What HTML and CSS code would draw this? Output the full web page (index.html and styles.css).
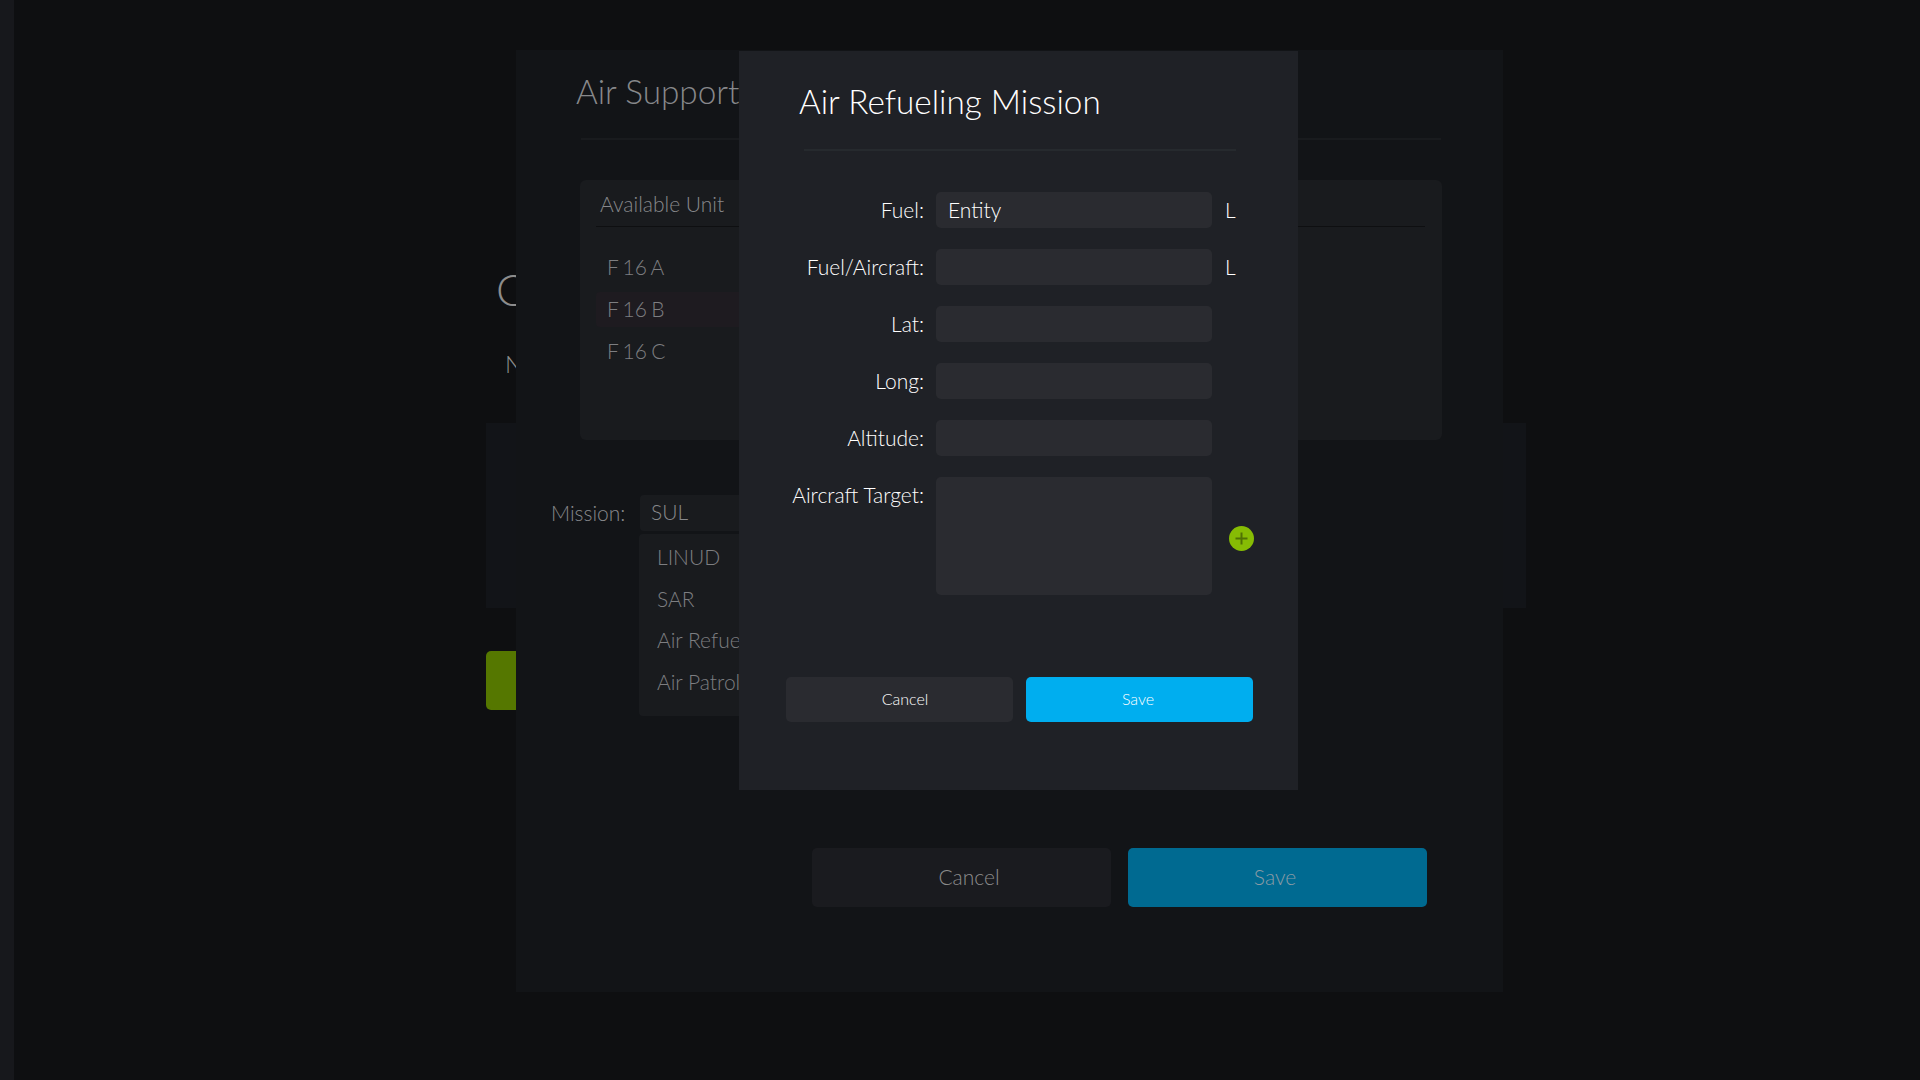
FILE: index.html
```html
<!DOCTYPE html>
<html lang="en">
<head>
<meta charset="utf-8">
<title>Air Refueling Mission</title>
<link rel="stylesheet" href="styles.css">
</head>
<body>
<div class="page">
  <aside class="sidebar"></aside>
  <main class="base">
    <h1 class="base-title">Create</h1>
    <p class="base-sub">New</p>
    <section class="base-panel"></section>
    <button class="base-green">Next</button>
  </main>
</div>

<div class="dialog dialog-back">
  <h2 class="dialog-title back-title">Air Support Request</h2>
  <div class="back-rule"></div>
  <section class="card">
    <div class="card-head">Available Unit</div>
    <ul class="unit-list">
      <li class="unit">F 16 A</li>
      <li class="unit unit-active">F 16 B</li>
      <li class="unit">F 16 C</li>
    </ul>
  </section>
  <div class="mission">
    <span class="mission-label">Mission:</span>
    <div class="mission-field">
      <div class="select">SUL</div>
      <ul class="dropdown">
        <li>LINUD</li>
        <li>SAR</li>
        <li>Air Refueling</li>
        <li>Air Patrol</li>
      </ul>
    </div>
  </div>
  <div class="back-actions">
    <button class="back-btn back-cancel">Cancel</button>
    <button class="back-btn back-save">Save</button>
  </div>
</div>

<div class="dialog dialog-front">
  <h2 class="dialog-title front-title">Air Refueling Mission</h2>
  <div class="front-rule"></div>
  <form class="form">
    <div class="row"><label class="label">Fuel:</label><div class="input">Entity</div><span class="unit-sign">L</span></div>
    <div class="row"><label class="label">Fuel/Aircraft:</label><div class="input"></div><span class="unit-sign">L</span></div>
    <div class="row"><label class="label">Lat:</label><div class="input"></div></div>
    <div class="row"><label class="label">Long:</label><div class="input"></div></div>
    <div class="row"><label class="label">Altitude:</label><div class="input"></div></div>
    <div class="row"><label class="label">Aircraft Target:</label><div class="input textarea"></div>
      <span class="add"><svg width="25" height="25" viewBox="0 0 25 25"><circle cx="12.5" cy="12.5" r="12.5" fill="#86bc04"/><path d="M12.5 6.5v12M6.5 12.5h12" stroke="#507204" stroke-width="2" fill="none"/></svg></span>
    </div>
  </form>
  <div class="front-actions">
    <button class="front-btn front-cancel">Cancel</button>
    <button class="front-btn front-save">Save</button>
  </div>
</div>
</body>
</html>
```

FILE: styles.css
```css
* { box-sizing: border-box; }
html, body { margin: 0; height: 100%; }
body {
  background: #0e0f11;
  font-family: Lato, "Liberation Sans", sans-serif;
  font-weight: 300;
  overflow: hidden;
}
ul { list-style: none; margin: 0; padding: 0; }
button { font-family: inherit; border: 0; cursor: pointer; }

.page { display: flex; height: 1080px; }
.sidebar { width: 14px; background: #17181c; flex: none; }
.base { flex: 1; padding: 264px 0 0 472px; }
.base-title { margin: 0 0 0 10px; font-size: 44px; font-weight: 300; line-height: 50px; color: #8c8c8c; }
.base-sub { margin: 35px 0 0 19px; font-size: 24px; line-height: 30px; color: #8c8c8c; height: 30px; }
.base-panel { width: 1040px; height: 185px; margin-top: 44px; background: #121418; }
.base-green { display: block; width: 120px; height: 59px; margin-top: 43px; background: #557700; border-radius: 5px; color: #557700; }

.dialog { position: absolute; }
.dialog-title { margin: 0; font-size: 33.3px; font-weight: 300; line-height: 40px; }

.dialog-back { left: 516px; top: 50px; width: 987px; height: 942px; background: #121417; padding-top: 21px; }
.back-title { margin-left: 60px; color: #87888b; white-space: nowrap; }
.back-rule { height: 2px; width: 860px; margin: 27px 0 0 65px; background: #191b1e; }
.card { width: 862px; height: 260px; margin: 40px 0 0 64px; padding: 0 17px 0 16px; background: #191b1e; border-radius: 6px; }
.card-head { height: 47px; padding-left: 4px; border-bottom: 1px solid #0e0f11; font-size: 21px; line-height: 47px; color: #87888b; }
.unit-list { margin-top: 23px; }
.unit { width: 600px; height: 35px; margin-bottom: 7px; padding-left: 11px; font-size: 21px; line-height: 33px; word-spacing: -1.5px; color: #7d7e81; border-radius: 4px; }
.unit-active { background: #1e1b20; }

.mission { display: flex; margin: 55px 0 0 35px; }
.mission-label { width: 89px; font-size: 21px; line-height: 36px; color: #87888b; }
.mission-field { width: 360px; }
.select { height: 36px; padding-left: 11px; background: #191b1e; border-radius: 4px; font-size: 21px; line-height: 34px; color: #87888b; }
.dropdown { height: 182px; margin: 3px 0 0 -1px; padding: 6px 0 0 18px; background: #191b1e; border-radius: 4px; font-size: 21px; color: #7d7e81; }
.dropdown li { height: 34px; margin-bottom: 7.7px; line-height: 34px; white-space: nowrap; }

.back-actions { display: flex; gap: 17px; margin: 132px 0 0 296px; }
.back-btn { width: 299px; height: 59px; padding-bottom: 4px; border-radius: 5px; font-size: 21px; font-weight: 300; }
.back-cancel { background: #1a1b1f; color: #8c8c8c; padding-left: 21px; }
.back-save { background: #006a91; color: #8a9ba5; padding-right: 11px; }

.dialog-front { left: 739px; top: 51px; width: 559px; height: 739px; background: #1f2126; padding-top: 30px; }
.front-title { margin-left: 60px; color: #fff; }
.front-rule { height: 2px; width: 432px; margin: 28px 0 0 65px; background: #262a2e; }
.form { display: flex; flex-direction: column; gap: 21px; margin-top: 41px; }
.row { display: flex; align-items: flex-start; }
.label { width: 185px; margin-right: 12px; text-align: right; font-size: 21px; line-height: 36px; color: #fff; white-space: nowrap; }
.input { width: 276px; height: 36px; padding-left: 12px; background: #2a2b30; border-radius: 5px; font-size: 21px; line-height: 36px; color: #fff; }
.textarea { height: 118px; }
.unit-sign { margin-left: 13px; font-size: 21px; line-height: 36px; color: #fff; }
.add { display: block; width: 25px; height: 25px; margin: 49px 0 0 17px; }
.add svg { display: block; }
.front-actions { display: flex; gap: 13px; margin: 82px 0 0 47px; }
.front-btn { width: 227px; height: 45px; padding-bottom: 3px; border-radius: 5px; font-size: 16px; font-weight: 300; color: #fff; }
.front-cancel { background: #2a2b30; padding-left: 17px; }
.front-save { background: #00aeef; padding-right: 9px; }
```
